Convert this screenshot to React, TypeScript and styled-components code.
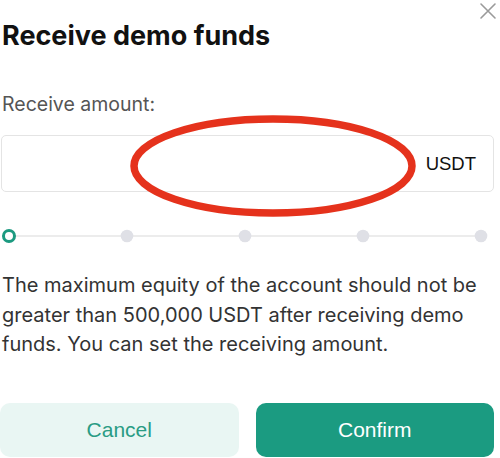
import React from "react";
import styled, { createGlobalStyle } from "styled-components";

const Global = createGlobalStyle`
  html, body { margin: 0; padding: 0; background: #ffffff; }
  body { font-family: Inter, "Noto Sans", sans-serif; }
`;

const Dialog = styled.div`
  position: relative;
  width: 500px;
  height: 458px;
  overflow: hidden;
  display: flex;
  flex-direction: column;
  padding: 0 6px 0 1px;
  box-sizing: border-box;
  background: #fff;
`;

const Close = styled.button`
  position: absolute;
  top: 2px;
  right: 3px;
  width: 18px;
  height: 18px;
  padding: 0;
  border: none;
  background: none;
  color: #9a9a9a;
  display: flex;
`;

const Title = styled.h1`
  margin: 19px 0 0 1px;
  font-family: Inter, sans-serif;
  font-size: 27px;
  line-height: 34px;
  font-weight: 700;
  color: #111;
`;

const Label = styled.div`
  margin: 39px 0 0 1px;
  font-size: 19.5px;
  line-height: 24px;
  color: #555;
`;

const InputWrap = styled.div`
  position: relative;
  margin-top: 19px;
  height: 57px;
  border: 1px solid #e4e4e4;
  border-radius: 5px;
  box-sizing: border-box;
  display: flex;
  align-items: center;
  padding: 0 17px 0 14px;
`;

const AmountInput = styled.input`
  flex: 1;
  min-width: 0;
  border: none;
  outline: none;
  background: transparent;
  font-size: 18px;
  font-family: Inter, sans-serif;
`;

const Unit = styled.span`
  font-family: "Liberation Sans", Arial, sans-serif;
  font-size: 18.5px;
  color: #111;
`;

const Ring = styled.svg`
  position: absolute;
  left: 121px;
  top: -24px;
  pointer-events: none;
`;

const Slider = styled.div`
  position: relative;
  margin: 37px 6px 0 1px;
  height: 14px;
  display: flex;
  align-items: center;
  justify-content: space-between;
`;

const Track = styled.div`
  position: absolute;
  left: 7px;
  right: 7px;
  top: 6px;
  height: 2px;
  background: #ececec;
`;

const Dot = styled.span<{ $active?: boolean }>`
  position: relative;
  width: 14px;
  height: 14px;
  border-radius: 50%;
  box-sizing: border-box;
  background: ${(p) => (p.$active ? "#fff" : "#dfe0e6")};
  border: ${(p) => (p.$active ? "3px solid #1c9a80" : "none")};
  transform: ${(p) => (p.$active ? "none" : "scale(0.9)")};
`;

const Note = styled.p`
  margin: 28px 0 0 1px;
  font-size: 20px;
  line-height: 29.5px;
  color: #333;
`;

const Actions = styled.div`
  margin-top: auto;
  margin-bottom: 1px;
  display: grid;
  grid-template-columns: 1fr 1fr;
  gap: 17px;
  margin-left: -1px;
`;

const Btn = styled.button<{ $primary?: boolean }>`
  height: 54px;
  border: none;
  border-radius: 10px;
  font-family: "Liberation Sans", Arial, sans-serif;
  font-size: 21px;
  background: ${(p) => (p.$primary ? "#1b9b81" : "#e9f6f3")};
  color: ${(p) => (p.$primary ? "#ffffff" : "#2a9c84")};
`;

export default function App() {
  return (
    <>
      <Global />
      <Dialog>
        <Close aria-label="close">
          <svg width="18" height="18" viewBox="0 0 18 18">
            <path d="M2 2 L16 16 M16 2 L2 16" stroke="currentColor" strokeWidth="1.6" strokeLinecap="round" />
          </svg>
        </Close>
        <Title>Receive demo funds</Title>
        <Label>Receive amount:</Label>
        <InputWrap>
          <AmountInput />
          <Unit>USDT</Unit>
          <Ring width="300" height="108" viewBox="0 0 300 108">
            <ellipse cx="150" cy="54" rx="139" ry="47" fill="none" stroke="#e5321c" strokeWidth="7.5" />
          </Ring>
        </InputWrap>
        <Slider>
          <Track />
          <Dot $active />
          <Dot />
          <Dot />
          <Dot />
          <Dot />
        </Slider>
        <Note>
          The maximum equity of the account should not be greater than 500,000 USDT after receiving demo
          funds. You can set the receiving amount.
        </Note>
        <Actions>
          <Btn>Cancel</Btn>
          <Btn $primary>Confirm</Btn>
        </Actions>
      </Dialog>
    </>
  );
}
